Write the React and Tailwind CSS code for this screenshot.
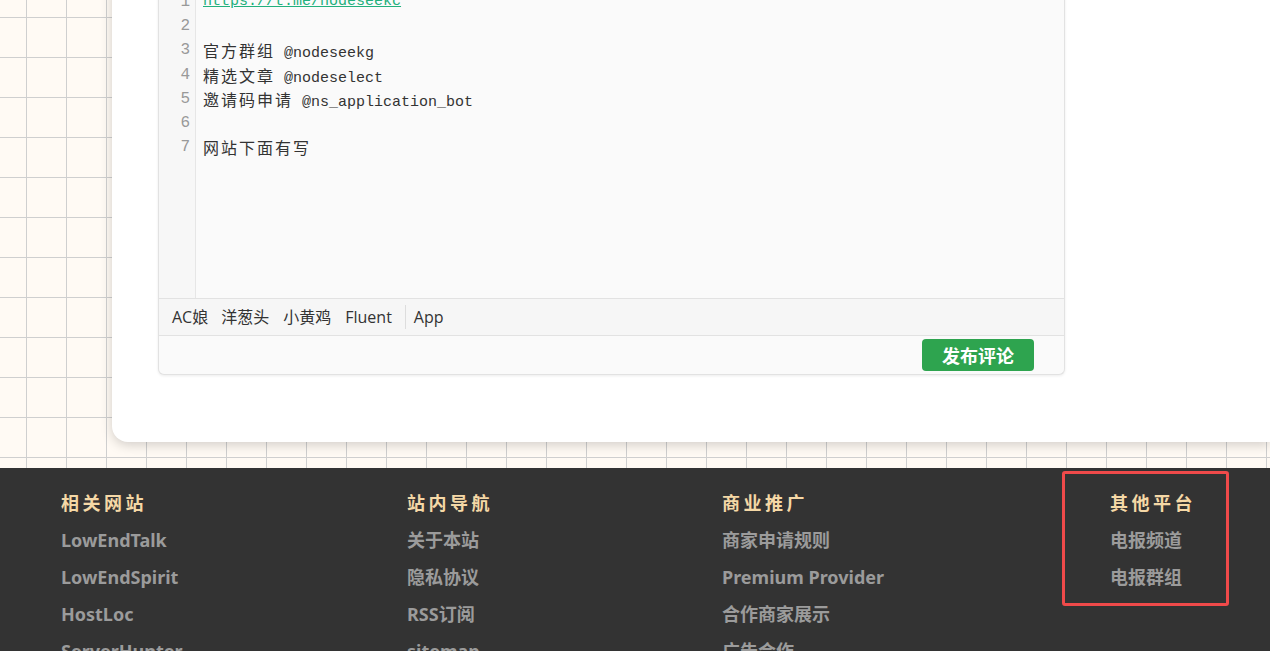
import React from "react";

const editorLines = [
  { link: "https://t.me/nodeseekc" },
  { text: "" },
  { text: "官方群组 @nodeseekg" },
  { text: "精选文章 @nodeselect" },
  { text: "邀请码申请 @ns_application_bot" },
  { text: "" },
  { text: "网站下面有写" },
];

const footerCols = [
  { title: "相关网站", links: ["LowEndTalk", "LowEndSpirit", "HostLoc", "ServerHunter"], w: "w-[346px]" },
  { title: "站内导航", links: ["关于本站", "隐私协议", "RSS订阅", "sitemap"], w: "w-[315px]" },
  { title: "商业推广", links: ["商家申请规则", "Premium Provider", "合作商家展示", "广告合作"], w: "w-[340px]" },
];

// split a line into cjk / latin runs so cjk glyphs take two mono cells
const MonoText = ({ text }) => {
  const parts = text.match(/[\u4e00-\u9fff]+|[^\u4e00-\u9fff]+/g) || [];
  return parts.map((p, i) =>
    /[\u4e00-\u9fff]/.test(p) ? (
      <span key={i} className="font-['Noto_Sans_CJK_SC',sans-serif] text-[16px] tracking-[2px]">
        {p}
      </span>
    ) : (
      <span key={i}>{p}</span>
    )
  );
};

const FooterCol = ({ title, links }) => (
  <div>
    <div className="text-[18px] leading-[37px] font-bold tracking-[3.5px] text-[#f5d8a6]">{title}</div>
    {links.map((l) => (
      <div key={l} className="text-[18px] leading-[37px] font-bold text-[#9b9b9b]">
        {l}
      </div>
    ))}
  </div>
);

export default function App() {
  return (
    <div className="h-[651px] overflow-hidden bg-[#fffaf4] bg-[linear-gradient(to_right,#cfcfcf_1px,transparent_1px),linear-gradient(to_bottom,#cfcfcf_1px,transparent_1px)] bg-[size:40px_40px] bg-[position:26px_17px] font-['Noto_Sans','Noto_Sans_CJK_SC',sans-serif]">
      <div className="ml-[112px] -mt-[13px] bg-white rounded-bl-[16px] shadow-[0_3px_12px_rgba(0,0,0,0.18)] pl-[46px] pb-[67px]">
        <div className="w-[907px] border-x border-b border-[#e2e2e2] rounded-b-[6px] bg-[#fafafa] shadow-[0_1px_3px_rgba(0,0,0,0.08)]">
          <div className="flex h-[311px]">
            <div className="w-[37px] shrink-0 border-r border-[#e6e6e6] bg-[#f7f7f7] pt-[3px] pr-[5px] text-right font-['Liberation_Mono',monospace] text-[16px] leading-[24.2px] text-[#999]">
              {editorLines.map((_, i) => (
                <div key={i}>{i + 1}</div>
              ))}
            </div>
            <div className="flex-1 pt-[3px] pl-[7px] font-['Liberation_Mono',monospace] text-[15px] leading-[24.2px] text-[#333]">
              {editorLines.map((l, i) => (
                <div key={i} className="h-[24.2px] whitespace-pre">
                  {l.link ? (
                    <span className="text-[#22b07c] underline">{l.link}</span>
                  ) : (
                    <MonoText text={l.text} />
                  )}
                </div>
              ))}
            </div>
          </div>
          <div className="flex items-center h-[38px] border-y border-[#e2e2e2] bg-[#f6f6f6] pl-[13px] text-[16px] text-[#333] font-['Open_Sans','Noto_Sans_CJK_SC',sans-serif]">
            <span>AC娘</span>
            <span className="ml-[13px]">洋葱头</span>
            <span className="ml-[14px]">小黄鸡</span>
            <span className="ml-[14px]">Fluent</span>
            <span className="ml-[13px] mr-[8px] h-[24px] w-px bg-[#ddd]" />
            <span>App</span>
          </div>
          <div className="flex h-[38px] items-center justify-end pr-[30px] rounded-b-[6px]">
            <button className="h-[32px] w-[112px] rounded-[4px] bg-[#2ea44f] text-[18px] font-bold text-white font-['Noto_Sans_CJK_SC',sans-serif]">
              发布评论
            </button>
          </div>
        </div>
      </div>

      <footer className="mt-[26px] flex items-start bg-[#333] pl-[61px] h-[200px]">
        {footerCols.map((c) => (
          <div key={c.title} className={`${c.w} pt-[17px]`}>
            <FooterCol title={c.title} links={c.links} />
          </div>
        ))}
        <div className="mt-[3px] w-[167px] rounded-[3px] border-[3px] border-[#f04a4a] pt-[11px] pb-[7px] pl-[45px]">
          <FooterCol title="其他平台" links={["电报频道", "电报群组"]} />
        </div>
      </footer>
    </div>
  );
}
